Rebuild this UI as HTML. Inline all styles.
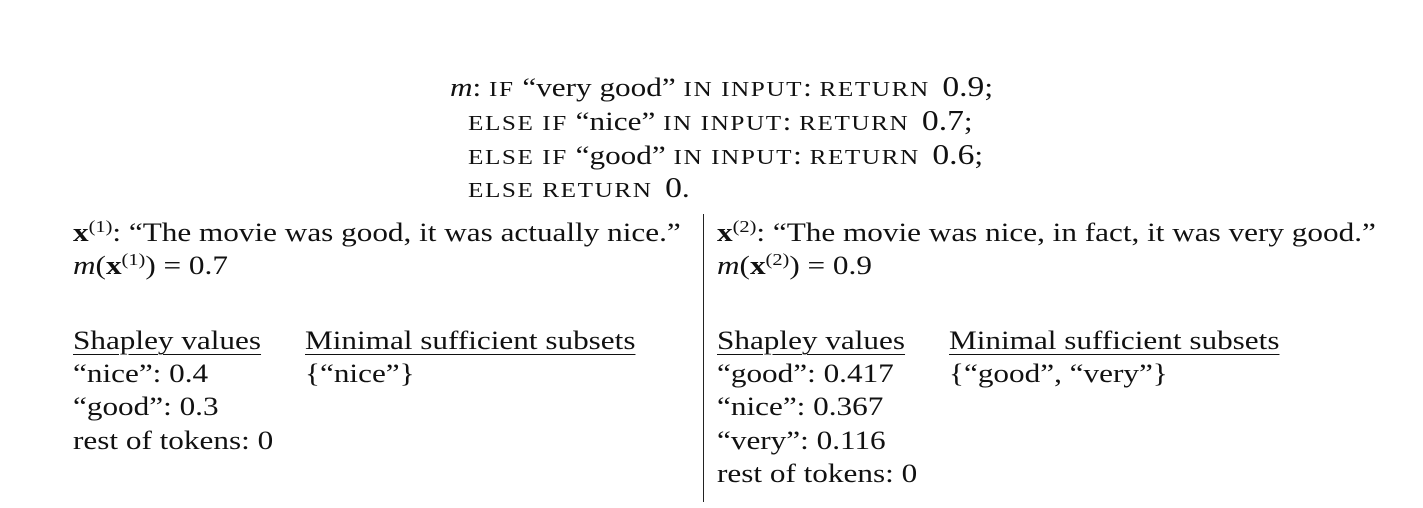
<!DOCTYPE html>
<html><head><style>
body{margin:0;width:1423px;height:508px;background:#fff;position:relative;overflow:hidden;font-family:"Liberation Serif",serif;font-size:26px;color:#111}
.l{position:absolute;white-space:nowrap;line-height:33px;transform:scaleX(1.2);transform-origin:0 0}
.sc{text-transform:uppercase;font-size:21px;letter-spacing:1.3px}
i{font-style:italic}
b{font-weight:bold}
sup{font-size:17px;vertical-align:9px;line-height:0}
u{text-decoration:underline;text-decoration-thickness:1px;text-underline-offset:5px}
.n{font-size:28px;margin-left:4px}
</style></head><body>
<div class="l" style="left:450px;top:71px"><i>m</i>: <span class="sc">if</span> “very good” <span class="sc">in input</span>: <span class="sc">return</span> <span class="n">0.9</span>;</div>
<div class="l" style="left:468px;top:105px"><span class="sc">else if</span> “nice” <span class="sc">in input</span>: <span class="sc">return</span> <span class="n">0.7</span>;</div>
<div class="l" style="left:468px;top:139px"><span class="sc">else if</span> “good” <span class="sc">in input</span>: <span class="sc">return</span> <span class="n">0.6</span>;</div>
<div class="l" style="left:468px;top:172px"><span class="sc">else return</span> <span class="n">0</span>.</div>

<div class="l" style="left:73px;top:216px"><b>x</b><sup>(1)</sup>: “The movie was good, it was actually nice.”</div>
<div class="l" style="left:73px;top:249px"><i>m</i>(<b>x</b><sup>(1)</sup>) = 0.7</div>
<div class="l" style="left:73px;top:324px"><u>Shapley values</u></div>
<div class="l" style="left:305px;top:324px"><u>Minimal sufficient subsets</u></div>
<div class="l" style="left:73px;top:357px">“nice”: 0.4</div>
<div class="l" style="left:305px;top:357px">{“nice”}</div>
<div class="l" style="left:73px;top:390px">“good”: 0.3</div>
<div class="l" style="left:73px;top:424px">rest of tokens: 0</div>

<div style="position:absolute;left:703px;top:214px;width:1px;height:288px;background:#222"></div>

<div class="l" style="left:717px;top:216px"><b>x</b><sup>(2)</sup>: “The movie was nice, in fact, it was very good.”</div>
<div class="l" style="left:717px;top:249px"><i>m</i>(<b>x</b><sup>(2)</sup>) = 0.9</div>
<div class="l" style="left:717px;top:324px"><u>Shapley values</u></div>
<div class="l" style="left:949px;top:324px"><u>Minimal sufficient subsets</u></div>
<div class="l" style="left:717px;top:357px">“good”: 0.417</div>
<div class="l" style="left:949px;top:357px">{“good”, “very”}</div>
<div class="l" style="left:717px;top:390px">“nice”: 0.367</div>
<div class="l" style="left:717px;top:424px">“very”: 0.116</div>
<div class="l" style="left:717px;top:457px">rest of tokens: 0</div>
</body></html>
